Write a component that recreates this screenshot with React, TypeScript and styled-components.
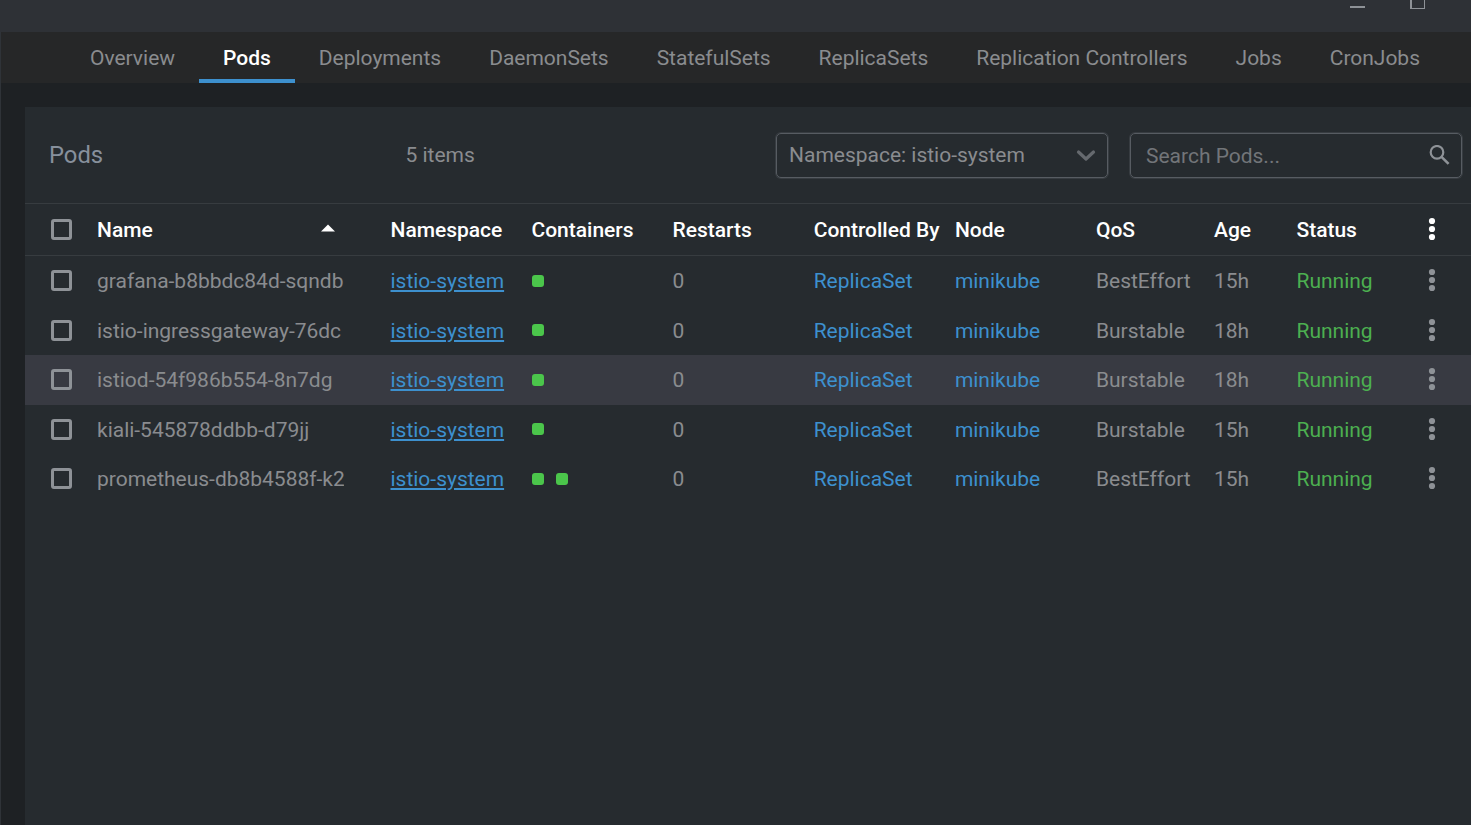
import React from "react";
import styled, { createGlobalStyle } from "styled-components";

const c = {
  title: "#2e3136",
  tabs: "#262728",
  main: "#1e2124",
  content: "#262b2f",
  hover: "#383a42",
  text: "#8a8c8f",
  accent: "#87909c",
  muted: "#8e9297",
  blue: "#3d90ce",
  line: "#373c40",
  field: "#575c62",
  fieldEdge: "#373c41",
  green: "#4caf50",
  brick: "#4bc64b",
};

const Global = createGlobalStyle`
  *, *::before, *::after { box-sizing: border-box; }
  html, body { margin: 0; background: ${c.main}; }
  body { font: 400 21px/26px Roboto, sans-serif; letter-spacing: -0.012px; color: ${c.text}; overflow: hidden; }
`;

const Window = styled.div`
  width: 1471px;
  height: 825px;
  display: flex;
  flex-direction: column;
  overflow: hidden;
`;

const TitleBar = styled.header`
  height: 32px;
  flex: none;
  background: ${c.title};
  display: flex;
  justify-content: flex-end;
  gap: 45px;
  padding-right: 46px;
`;

const Minimize = styled.span`
  width: 15px;
  height: 2px;
  margin-top: 6px;
  background: ${c.muted};
`;

const Maximize = styled.span`
  width: 15px;
  height: 9px;
  border: solid ${c.muted};
  border-width: 0 1px 1px 2px;
`;

const Body = styled.div`
  flex: 1;
  min-height: 0;
  display: flex;
  flex-direction: column;
  border-left: 1px solid #2f3338;
`;

const Tabs = styled.nav`
  height: 51px;
  flex: none;
  display: flex;
  padding-left: 65px;
  background: ${c.tabs};
`;

const Tab = styled.a<{ $active?: boolean }>`
  padding: 13px 24px 0;
  white-space: nowrap;
  color: ${(p) => (p.$active ? "#fff" : c.text)};
  font-weight: ${(p) => (p.$active ? 480 : 400)};
  border-bottom: 4px solid ${(p) => (p.$active ? c.blue : "transparent")};
`;

const Panel = styled.main`
  flex: 1;
  margin: 24px 0 0 24px;
  background: ${c.content};
`;

const PanelHeader = styled.div`
  height: 96px;
  display: flex;
  align-items: center;
  padding: 0 9px 0 24px;
`;

const Title = styled.h1`
  width: 356.5px;
  margin: 0;
  font-size: 23.8px;
  font-weight: 400;
  color: ${c.accent};
`;

const Count = styled.div`
  flex: 1;
`;

const Field = styled.div<{ $inset: number; $dim?: boolean }>`
  width: 332px;
  height: 45px;
  display: flex;
  align-items: center;
  justify-content: space-between;
  padding: ${(p) => (p.$dim ? "1px" : "0")} 11px 0 ${(p) => p.$inset}px;
  border: 1px solid ${c.field};
  border-radius: 5px;
  box-shadow: 0 0 0 1px ${c.fieldEdge};
  color: ${(p) => (p.$dim ? "#727579" : c.text)};

  & + & {
    margin-left: 22px;
  }
`;

const Row = styled.div<{ $head?: boolean; $hover?: boolean }>`
  display: grid;
  grid-template-columns: 60px 293.5px 141px 141.1px 141.1px 141.2px 141.1px 118px 82.5px 117px 1fr;
  align-items: center;
  height: ${(p) => (p.$head ? "53px" : "49.5px")};
  color: ${(p) => (p.$head ? "#fff" : c.text)};
  font-weight: ${(p) => (p.$head ? 480 : 400)};
  background: ${(p) => (p.$hover ? c.hover : "transparent")};
  border: solid ${c.line};
  border-width: ${(p) => (p.$head ? "1px 0" : "0")};
`;

const Cell = styled.div<{ $color?: string }>`
  padding: 0.7px 0 0 12px;
  white-space: nowrap;
  color: ${(p) => p.$color ?? "inherit"};
`;

const NameCell = styled(Cell)`
  display: flex;
  align-items: center;
  justify-content: space-between;
  padding-right: 44px;
`;

const SortArrow = styled.svg`
  margin-bottom: 3px;
`;

const PodName = styled.div`
  width: 247px;
  margin-left: 12px;
  padding-top: 0.7px;
  overflow: hidden;
  white-space: nowrap;
`;

const Link = styled.a`
  color: ${c.blue};
  text-decoration: underline;
`;

const Checkbox = styled.span`
  display: block;
  width: 21px;
  height: 21px;
  margin-left: 26px;
  border: 3px solid ${c.muted};
  border-radius: 3px;
`;

const Bricks = styled.div`
  display: flex;
  gap: 12px;
  padding-left: 12.5px;
`;

const Brick = styled.span`
  width: 12px;
  height: 12px;
  border-radius: 3px;
  background: ${c.brick};
`;

const Kebab = styled.svg`
  display: block;
  width: 8px;
  height: 24px;
  margin: -1.3px 0 0 26.5px;
`;

const Menu = ({ color }: { color: string }) => (
  <Kebab viewBox="0 0 8 24" fill={color}>
    <circle cx="4" cy="4" r="3.1" />
    <circle cx="4" cy="12" r="3.1" />
    <circle cx="4" cy="20" r="3.1" />
  </Kebab>
);

const tabs = [
  "Overview", "Pods", "Deployments", "DaemonSets", "StatefulSets",
  "ReplicaSets", "Replication Controllers", "Jobs", "CronJobs",
];

const pods = [
  { name: "grafana-b8bbdc84d-sqndb", containers: 1, qos: "BestEffort", age: "15h" },
  { name: "istio-ingressgateway-76dc", containers: 1, qos: "Burstable", age: "18h" },
  { name: "istiod-54f986b554-8n7dg", containers: 1, qos: "Burstable", age: "18h", hover: true },
  { name: "kiali-545878ddbb-d79jj", containers: 1, qos: "Burstable", age: "15h" },
  { name: "prometheus-db8b4588f-k2", containers: 2, qos: "BestEffort", age: "15h" },
];

export default function App() {
  return (
    <Window>
      <Global />
      <TitleBar>
        <Minimize />
        <Maximize />
      </TitleBar>
      <Body>
        <Tabs>
          {tabs.map((t) => (
            <Tab key={t} $active={t === "Pods"}>{t}</Tab>
          ))}
        </Tabs>
        <Panel>
          <PanelHeader>
            <Title>Pods</Title>
            <Count>5 items</Count>
            <Field $inset={12}>
              Namespace: istio-system
              <svg width="20" height="13" viewBox="0 0 20 13" fill="none" stroke="#65696e" strokeWidth="3.2" strokeLinecap="round" strokeLinejoin="round">
                <path d="M2.5 3 L10 10 L17.5 3" />
              </svg>
            </Field>
            <Field $inset={15} $dim>
              Search Pods...
              <svg width="21" height="21" viewBox="0 0 21 21" fill="none" stroke={c.muted} strokeWidth="2.2">
                <circle cx="8" cy="7.3" r="6.3" />
                <path d="M12.5 11.8 L19.6 18.9" strokeWidth="2.6" />
              </svg>
            </Field>
          </PanelHeader>
          <Row $head>
            <Checkbox />
            <NameCell>
              Name
              <SortArrow width="14" height="8" viewBox="0 0 14 8" fill="#fff">
                <path d="M0 7.5 L7 0.5 L14 7.5 Z" />
              </SortArrow>
            </NameCell>
            <Cell>Namespace</Cell>
            <Cell>Containers</Cell>
            <Cell>Restarts</Cell>
            <Cell>Controlled By</Cell>
            <Cell>Node</Cell>
            <Cell>QoS</Cell>
            <Cell>Age</Cell>
            <Cell>Status</Cell>
            <Menu color="#fff" />
          </Row>
          {pods.map((p) => (
            <Row key={p.name} $hover={p.hover}>
              <Checkbox />
              <PodName>{p.name}</PodName>
              <Cell><Link>istio-system</Link></Cell>
              <Bricks>
                {Array.from({ length: p.containers }, (_, i) => <Brick key={i} />)}
              </Bricks>
              <Cell>0</Cell>
              <Cell $color={c.blue}>ReplicaSet</Cell>
              <Cell $color={c.blue}>minikube</Cell>
              <Cell>{p.qos}</Cell>
              <Cell>{p.age}</Cell>
              <Cell $color={c.green}>Running</Cell>
              <Menu color={c.muted} />
            </Row>
          ))}
        </Panel>
      </Body>
    </Window>
  );
}
